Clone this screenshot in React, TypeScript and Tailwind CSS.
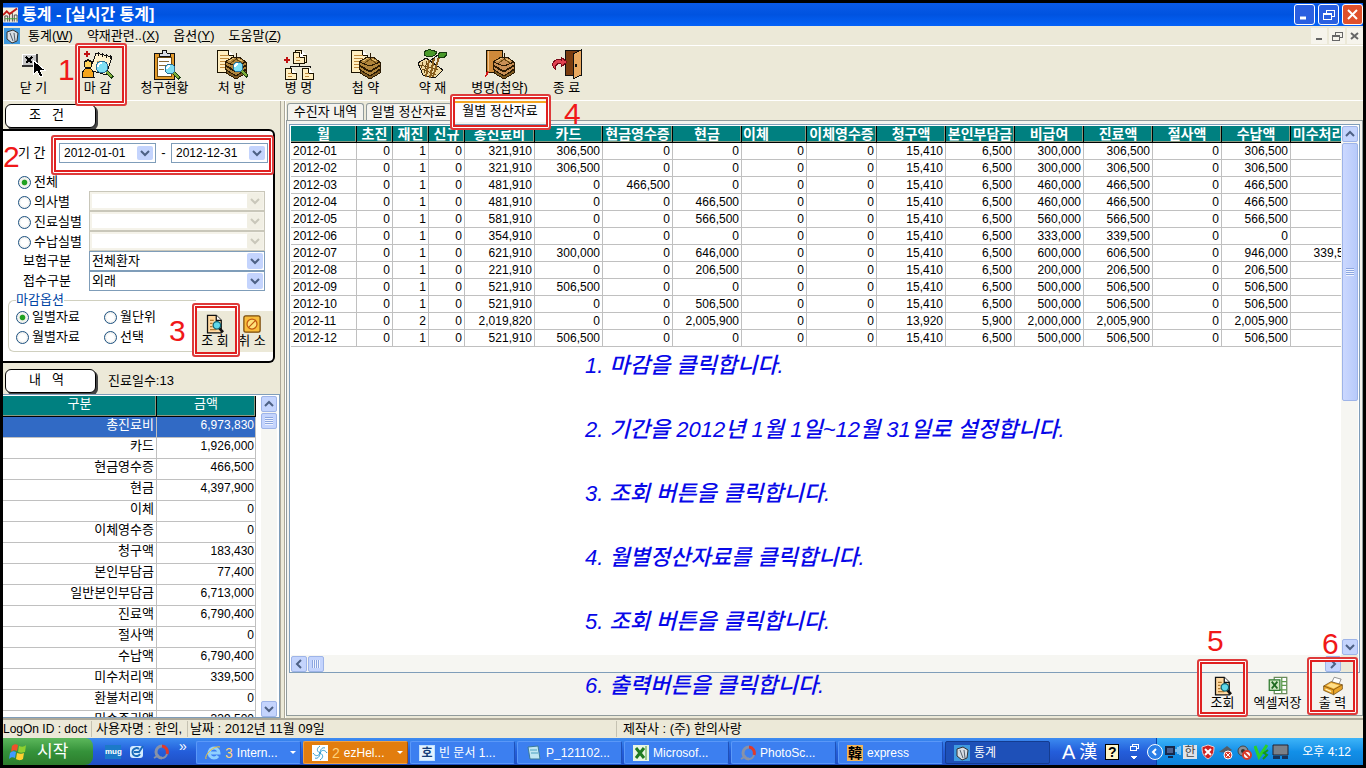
import { useState } from 'react';
import type { ReactNode } from 'react';
import clsx from 'clsx';

interface Column {
  name: string;
  width: number;
  align?: 'left';
}

const columns: Column[] = [
  { name: '월', width: 66 },
  { name: '초진', width: 36 },
  { name: '재진', width: 36 },
  { name: '신규', width: 36 },
  { name: '총진료비', width: 70 },
  { name: '카드', width: 68 },
  { name: '현금영수증', width: 70 },
  { name: '현금', width: 69 },
  { name: '이체', width: 65, align: 'left' },
  { name: '이체영수증', width: 70 },
  { name: '청구액', width: 69 },
  { name: '본인부담금', width: 69 },
  { name: '비급여', width: 69 },
  { name: '진료액', width: 69 },
  { name: '절사액', width: 69 },
  { name: '수납액', width: 69 },
  { name: '미수처리액', width: 69 },
];

const months: string[][] = [
  ['2012-01', '0', '1', '0', '321,910', '306,500', '0', '0', '0', '0', '15,410', '6,500', '300,000', '306,500', '0', '306,500', ''],
  ['2012-02', '0', '1', '0', '321,910', '306,500', '0', '0', '0', '0', '15,410', '6,500', '300,000', '306,500', '0', '306,500', ''],
  ['2012-03', '0', '1', '0', '481,910', '0', '466,500', '0', '0', '0', '15,410', '6,500', '460,000', '466,500', '0', '466,500', ''],
  ['2012-04', '0', '1', '0', '481,910', '0', '0', '466,500', '0', '0', '15,410', '6,500', '460,000', '466,500', '0', '466,500', ''],
  ['2012-05', '0', '1', '0', '581,910', '0', '0', '566,500', '0', '0', '15,410', '6,500', '560,000', '566,500', '0', '566,500', ''],
  ['2012-06', '0', '1', '0', '354,910', '0', '0', '0', '0', '0', '15,410', '6,500', '333,000', '339,500', '0', '0', ''],
  ['2012-07', '0', '1', '0', '621,910', '300,000', '0', '646,000', '0', '0', '15,410', '6,500', '600,000', '606,500', '0', '946,000', '339,500'],
  ['2012-08', '0', '1', '0', '221,910', '0', '0', '206,500', '0', '0', '15,410', '6,500', '200,000', '206,500', '0', '206,500', ''],
  ['2012-09', '0', '1', '0', '521,910', '506,500', '0', '0', '0', '0', '15,410', '6,500', '500,000', '506,500', '0', '506,500', ''],
  ['2012-10', '0', '1', '0', '521,910', '0', '0', '506,500', '0', '0', '15,410', '6,500', '500,000', '506,500', '0', '506,500', ''],
  ['2012-11', '0', '2', '0', '2,019,820', '0', '0', '2,005,900', '0', '0', '13,920', '5,900', '2,000,000', '2,005,900', '0', '2,005,900', ''],
  ['2012-12', '0', '1', '0', '521,910', '506,500', '0', '0', '0', '0', '15,410', '6,500', '500,000', '506,500', '0', '506,500', ''],
];

const summary: [string, string][] = [
  ['총진료비', '6,973,830'],
  ['카드', '1,926,000'],
  ['현금영수증', '466,500'],
  ['현금', '4,397,900'],
  ['이체', '0'],
  ['이체영수증', '0'],
  ['청구액', '183,430'],
  ['본인부담금', '77,400'],
  ['일반본인부담금', '6,713,000'],
  ['진료액', '6,790,400'],
  ['절사액', '0'],
  ['수납액', '6,790,400'],
  ['미수처리액', '339,500'],
  ['환불처리액', '0'],
  ['미수준리액', '339,500'],
];

const notes = [
  '1. 마감을 클릭합니다.',
  '2. 기간을 2012년 1월 1일~12월 31일로 설정합니다.',
  '3. 조회 버튼을 클릭합니다.',
  '4. 월별정산자료를 클릭합니다.',
  '5. 조회 버튼을 클릭합니다.',
  '6. 출력버튼을 클릭합니다.',
];

/* ---------- icon parts ---------- */

function Page({ x, y, w = 16, h = 20 }: { x: number; y: number; w?: number; h?: number }) {
  const lines = [];
  for (let ly = y + 5; ly < y + h - 2; ly += 3) lines.push(ly);
  return (
    <g>
      <path d={`M${x} ${y}h${w - 5}l5 5v${h - 5}h-${w}z`} fill="#ffeec0" stroke="#1a1200" />
      <path d={`M${x + w - 5} ${y}v5h5`} fill="#fff" stroke="#1a1200" />
      {lines.map((ly) => (
        <path key={ly} d={`M${x + 3} ${ly}h${w - 7}`} stroke="#c08a3c" />
      ))}
    </g>
  );
}

function Magnifier({ x, y, r = 5 }: { x: number; y: number; r?: number }) {
  return (
    <g>
      <path d={`M${x + r - 1} ${y + r - 1}l6 6`} stroke="#173b10" strokeWidth="4" />
      <path d={`M${x + r - 1} ${y + r - 1}l5 5`} stroke="#7fae3a" strokeWidth="2" />
      <circle cx={x} cy={y} r={r} fill="#7fe0f5" stroke="#2b6f97" />
      <path d={`M${x - r + 2} ${y}a${r - 2} ${r - 2} 0 0 1 ${r - 2} -${r - 2}`} stroke="#fff" strokeWidth="2" fill="none" />
    </g>
  );
}

function HerbPack({ x, y, color = '#b0853c' }: { x: number; y: number; color?: string }) {
  return (
    <g transform={`translate(${x} ${y})`} stroke="#2a1a04">
      <path d="M1 14l10 6 10-6v3l-10 6-10-6z" fill="#7d5a22" />
      <path d="M0 10l11 6 10-6v3l-10 7-11-7z" fill={color} />
      <path d="M0 6L8 1h6l7 5v3l-10 6L0 9z" fill={color} />
      <path d="M0 6l11 4 10-4M11 -3v6" fill="none" />
      <path d="M11 3l-5 4M11 3l6 4" stroke="#6b4a12" fill="none" />
      <path d="M4 5l5-3M13 3l4 2" stroke="#e7c67c" />
    </g>
  );
}

/* Toolbar pictures are low-resolution pixel art, so edges stay hard */
function Svg({ size = 32, children }: { size?: number; children: ReactNode }) {
  return (
    <svg
      width={size}
      height={size}
      viewBox="0 0 32 32"
      fill="none"
      shapeRendering={size === 32 ? 'crispEdges' : 'auto'}
      aria-hidden="true"
    >
      {children}
    </svg>
  );
}

const icons: Record<string, ReactNode> = {
  close: (
    <Svg>
      <path d="M4 5h14v12H4z" fill="#c6c6c6" />
      <path d="M4 17V5h14" stroke="#fff" />
      <path d="M4 17h15V5" stroke="#333" strokeWidth="2" />
      <path d="M8 8l6 6M14 8l-6 6" stroke="#000" strokeWidth="2" />
      <path d="M15 11v15l4-4 3 6 3-1-3-6h5z" fill="#000" stroke="#fff" />
    </Svg>
  ),
  closing: (
    <Svg>
      <path d="M5 2v6M2 5h6" stroke="#c01010" strokeWidth="2" />
      <path d="M14 4l16 4-6 18-16-5z" fill="#fff3cf" stroke="#111" />
      <path d="M16 3v4M20 4v4M24 5v4M28 6v4" stroke="#111" />
      <path d="M15 12l4 1M14 16l4 1" stroke="#c9a35a" />
      <path d="M0 28c0-8 3-9 6-9s6 1 6 9z" fill="#f4a51c" stroke="#111" />
      <circle cx="6" cy="15" r="4" fill="#ffd35a" stroke="#111" />
      <path d="M2 14c0-5 8-5 8 0l-4-2z" fill="#111" />
      <Magnifier x={20} y={18} r={6} />
    </Svg>
  ),
  clipboard: (
    <Svg>
      <path d="M5 4h20v26H5z" fill="#e39a2a" stroke="#111" />
      <path d="M8 8h14v19H8z" fill="#fff" stroke="#6b4a12" />
      <path d="M10 7V4h3c0-4 5-4 5 0h3v3z" fill="#d8dce4" stroke="#111" />
      <path d="M10 12h10M10 16h7M10 20h5" stroke="#8c6a36" />
      <Magnifier x={21} y={20} r={5} />
    </Svg>
  ),
  prescription: (
    <Svg>
      <Page x={1} y={1} w={16} h={22} />
      <HerbPack x={9} y={7} />
      <Magnifier x={22} y={18} r={5} />
    </Svg>
  ),
  disease: (
    <Svg>
      <path d="M16 13v4M7 19v-2h20v2" stroke="#111" />
      <path d="M4 8v6M1 11h6" stroke="#c01010" strokeWidth="2" />
      <Page x={12} y={1} w={11} h={12} />
      <Page x={10} y={3} w={11} h={11} />
      <Page x={2} y={19} w={11} h={11} />
      <Page x={19} y={19} w={11} h={11} />
    </Svg>
  ),
  pack: (
    <Svg>
      <Page x={1} y={1} w={16} h={22} />
      <HerbPack x={9} y={7} />
    </Svg>
  ),
  herb: (
    <Svg>
      <path d="M1 14l8-5 17 12-8 8-12-3z" fill="#efd9a0" stroke="#111" />
      <path d="M3 16l18 5M5 20l14 6M6 13l-2 6M10 12l-3 12" stroke="#6b4a12" />
      <path d="M12 11l-3 17M17 9l-4 20M22 8l-6 20" stroke="#8a5f1e" strokeWidth="2" />
      <path d="M13 12l8-6 4 1" stroke="#111" />
      <path d="M7 3c4-4 9-2 13 0-3 6-9 6-13 3z" fill="#4a9a2a" stroke="#173b10" />
      <path d="M21 5c3-3 6-2 9-1-1 5-5 6-9 4z" fill="#4a9a2a" stroke="#173b10" />
    </Svg>
  ),
  diseasePack: (
    <Svg>
      <path d="M2 1h16v22l-14 1-2-2z" fill="#cf8a3a" stroke="#1a1200" />
      <path d="M4 2v20" stroke="#f2c38a" />
      <path d="M3 22l-2 6 3-2 1-3z" fill="#d01818" />
      <HerbPack x={9} y={7} color="#c78f55" />
    </Svg>
  ),
  exit: (
    <Svg>
      <path d="M14 1h16v25H14z" fill="#7a3c10" stroke="#111" />
      <path d="M22 5l8-4v25l-8 4z" fill="#e8a860" stroke="#111" />
      <path d="M25 15v3" stroke="#111" strokeWidth="2" />
      <path d="M4 20c-5-5-1-11 6-9V8l6 5-6 5v-3c-4-1-6 1-6 5z" fill="#e04050" stroke="#7a0a18" />
    </Svg>
  ),
  search: (
    <Svg size={20}>
      <path d="M4 2h14l8 8v20H4z" fill="#ffd9a0" stroke="#111" strokeWidth="2" />
      <path d="M18 2v8h8" fill="#fff" stroke="#111" strokeWidth="2" />
      <path d="M8 10h6M8 15h4M8 20h4M8 25h10" stroke="#b07a30" strokeWidth="2" />
      <path d="M22 22l7 7" stroke="#111" strokeWidth="4" />
      <circle cx="19" cy="18" r="6" fill="#5fd8ea" stroke="#0d6070" strokeWidth="2" />
    </Svg>
  ),
  cancel: (
    <Svg size={20}>
      <rect x="3" y="3" width="26" height="26" rx="3" fill="#f9bd3c" stroke="#7a4a08" strokeWidth="2" />
      <circle cx="16" cy="16" r="8" fill="#ffe27a" stroke="#c05a10" strokeWidth="2" />
      <path d="M11 21l10-10" stroke="#c05a10" strokeWidth="2" />
    </Svg>
  ),
  excel: (
    <Svg size={20}>
      <path d="M10 2h20v26H10z" fill="#fff" stroke="#6a8a5c" strokeWidth="2" />
      <path d="M22 3v24M22 9h8M22 15h8M12 22h18" stroke="#5c9a4c" strokeWidth="2" />
      <path d="M2 6h17v17H2z" fill="#cfe6c4" stroke="#2f7a2f" strokeWidth="2" />
      <path d="M6 9l9 11M15 9l-9 11" stroke="#1f6a22" strokeWidth="3" />
    </Svg>
  ),
  printer: (
    <Svg size={20}>
      <path d="M14 10l4-8 11 3-4 9z" fill="#fff" stroke="#555" />
      <path d="M1 16l12-7 18 5v7l-14 9L1 23z" fill="#eaa52a" stroke="#5a3806" />
      <path d="M1 16l16 6 14-8M17 22v8" stroke="#5a3806" />
      <path d="M6 15l7-4 13 4-9 5z" fill="#ffdf8a" />
      <path d="M4 21l9 4" stroke="#fff2c0" strokeWidth="2" />
    </Svg>
  ),
};

function AppIcon() {
  return (
    <svg width="16" height="16" viewBox="0 0 16 16" aria-hidden="true">
      <rect width="16" height="16" fill="#3f9ae0" />
      <path d="M3 4l6-2 5 3-1 8-5 2-5-4z" fill="#d7dde4" stroke="#333" />
      <path d="M6 5l3 8M10 5l1 8" stroke="#55606e" />
    </svg>
  );
}

/* ---------- small controls ---------- */

function Chevron({ dir = 'down', disabled }: { dir?: 'up' | 'down' | 'left' | 'right'; disabled?: boolean }) {
  const paths = {
    down: 'M1 3l4 4 4-4',
    up: 'M1 7l4-4 4 4',
    left: 'M7 1L3 5l4 4',
    right: 'M3 1l4 4-4 4',
  };
  return (
    <svg width="10" height="10" viewBox="0 0 10 10" fill="none" aria-hidden="true">
      <path d={paths[dir]} stroke={disabled ? '#c9c7ba' : '#4d6185'} strokeWidth="2" />
    </svg>
  );
}

function ScrollButton({ dir, label }: { dir: 'up' | 'down' | 'left' | 'right'; label: string }) {
  return (
    <button
      type="button"
      aria-label={label}
      className="flex size-4 shrink-0 items-center justify-center rounded-xs border border-[#9eb4e8] bg-[#c4d4fd]"
    >
      <Chevron dir={dir} />
    </button>
  );
}

function Combo({ label, value, disabled }: { label: string; value?: string; disabled?: boolean }) {
  return (
    <div className={clsx('relative h-5 w-[176px] border bg-white', disabled ? 'border-[#c9c7ba]' : 'border-[#7f9db9]')}>
      <select
        aria-label={label}
        disabled={disabled}
        className={clsx(
          'block size-full appearance-none pl-0.5 text-[13px] leading-4 opacity-100 outline-none',
          disabled && 'border-2 border-[#f5f3ea]'
        )}
      >
        <option>{value ?? ''}</option>
      </select>
      <span
        className={clsx(
          'pointer-events-none absolute inset-y-px right-px flex w-4 items-center justify-center rounded-xs',
          disabled ? 'bg-[#f1efe4]' : 'bg-[#c4d4fd]'
        )}
      >
        <Chevron disabled={disabled} />
      </span>
    </div>
  );
}

function DateBox({ label, value }: { label: string; value: string }) {
  return (
    <div className="flex h-5 w-[97px] items-center border border-[#7f9db9] bg-white pr-0.5">
      <input aria-label={label} defaultValue={value} className="w-full min-w-0 pl-1 text-xs leading-4 outline-none" />
      <button type="button" aria-label={`${label} 선택`} className="flex h-3.5 w-4 shrink-0 items-center justify-center rounded-xs bg-[#c4d4fd]">
        <Chevron />
      </button>
    </div>
  );
}

interface RadioProps {
  name: string;
  label: string;
  checked: boolean;
  onChange: () => void;
  className?: string;
}

function Radio({ name, label, checked, onChange, className }: RadioProps) {
  return (
    <label className={clsx('flex items-center gap-[3px] whitespace-nowrap', className)}>
      <input
        type="radio"
        name={name}
        checked={checked}
        onChange={onChange}
        className="size-[13px] shrink-0 appearance-none rounded-full border border-[#1c5180] bg-[radial-gradient(circle,#fff_40%,#dcdcd7)] checked:bg-[radial-gradient(circle,#21a121_30%,#f2f2ee_42%)]"
      />
      <span>{label}</span>
    </label>
  );
}

/* Red double frame drawn round a control */
function Frame({ className }: { className: string }) {
  return (
    <span
      className={clsx(
        'pointer-events-none absolute z-10 rounded-[3px] border-2 border-[#de3a3a] shadow-[inset_0_0_0_1px_#fff,inset_0_0_0_3px_#e02020]',
        className
      )}
    />
  );
}

function Step({ children, className }: { children: ReactNode; className: string }) {
  return (
    <span className={clsx('pointer-events-none absolute z-10 text-[30px] leading-6 text-[#f01818]', className)}>{children}</span>
  );
}

/* ---------- window chrome ---------- */

function TitleBar() {
  const base = 'flex size-[21px] items-center justify-center rounded-[3px] border border-white';
  return (
    <header className="flex h-[23px] shrink-0 items-center bg-linear-to-b from-[#0a5ae8] via-[#0053e0] to-[#0462f8]">
      <svg width="15" height="16" viewBox="0 0 16 16" aria-hidden="true">
        <rect width="16" height="16" fill="#f3efe0" />
        <path d="M2 15V9h3v6M7 15V6h3v9M12 15V8h3v7" fill="none" stroke="#444" />
        <path d="M2 12h13" stroke="#3a9a3a" />
        <path d="M0 8l4-4 3 3 8-6" fill="none" stroke="#c01818" strokeWidth="2" />
      </svg>
      <h1 className="ml-1 text-[16px] leading-5 font-bold whitespace-pre text-white">통계 - [실시간 통계]</h1>
      <div className="ml-auto flex gap-[3px] text-white">
        <button type="button" aria-label="최소화" className={clsx(base, 'bg-[#2a5fe0]')}>
          <svg width="13" height="13" viewBox="0 0 13 13"><path d="M2 10h6" stroke="currentColor" strokeWidth="3" /></svg>
        </button>
        <button type="button" aria-label="이전 크기로" className={clsx(base, 'bg-[#2a5fe0]')}>
          <svg width="13" height="13" viewBox="0 0 13 13" fill="none" shapeRendering="crispEdges">
            <path d="M4 5V2h8v6H9M1 5h8v6H1zM1 6h8" stroke="currentColor" />
          </svg>
        </button>
        <button type="button" aria-label="닫기" className={clsx(base, 'bg-[#e0512c]')}>
          <svg width="13" height="13" viewBox="0 0 13 13"><path d="M2 2l9 9M11 2l-9 9" stroke="currentColor" strokeWidth="2" /></svg>
        </button>
      </div>
    </header>
  );
}

function MenuBar() {
  const items: [string, string][] = [
    ['통계', 'W'],
    ['약재관련..', 'X'],
    ['옵션', 'Y'],
    ['도움말', 'Z'],
  ];
  const mdi = 'flex size-4 items-center justify-center bg-[#f6f4ec] text-[#666]';
  return (
    <nav className="flex h-5 shrink-0 items-center border-b border-white pl-px">
      <AppIcon />
      <div className="ml-2 flex gap-3.5">
        {items.map(([name, key]) => (
          <button key={key} type="button" className="leading-4">
            {name}(<u>{key}</u>)
          </button>
        ))}
      </div>
      <div className="ml-auto flex gap-0.5">
        <button type="button" aria-label="문서 최소화" className={mdi}>
          <svg width="12" height="12" viewBox="0 0 12 12"><path d="M3 9h6" stroke="currentColor" strokeWidth="2" /></svg>
        </button>
        <button type="button" aria-label="문서 이전 크기로" className={mdi}>
          <svg width="12" height="12" viewBox="0 0 12 12" fill="none" shapeRendering="crispEdges">
            <path d="M4 5V2h7v5H8M1 5h7v5H1zM1 6h7" stroke="currentColor" />
          </svg>
        </button>
        <button type="button" aria-label="문서 닫기" className={mdi}>
          <svg width="12" height="12" viewBox="0 0 12 12"><path d="M2 3l7 6M9 3l-7 6" stroke="currentColor" strokeWidth="2" /></svg>
        </button>
      </div>
    </nav>
  );
}

function ToolBar() {
  const tools = [
    { label: '닫 기', icon: 'close' },
    { label: '마 감', icon: 'closing' },
    { label: '청구현황', icon: 'clipboard' },
    { label: '처 방', icon: 'prescription' },
    { label: '병 명', icon: 'disease' },
    { label: '첩 약', icon: 'pack' },
    { label: '약 재', icon: 'herb' },
    { label: '병명(첩약)', icon: 'diseasePack' },
    { label: '종 료', icon: 'exit' },
  ];
  return (
    <div className="flex h-[55px] shrink-0 border-b border-white">
      {tools.map((tool, i) => (
        <button
          key={tool.icon}
          type="button"
          className={clsx('relative flex flex-col items-center pt-[3px]', i === 0 ? 'w-[61px]' : 'w-[67px]')}
        >
          {icons[tool.icon]}
          <span className="leading-[14px] whitespace-nowrap">{tool.label}</span>
          {tool.icon === 'closing' && (
            <>
              <Frame className="-top-[3px] left-[11px] h-[63px] w-[52px]" />
              <Step className="top-3 -left-1.5">1</Step>
            </>
          )}
        </button>
      ))}
    </div>
  );
}

function SectionTab({ children }: { children: ReactNode }) {
  return (
    <h2 className="flex h-6 w-[91px] items-center justify-center rounded-md border border-black bg-white pr-2 pb-0.5 whitespace-pre shadow-[2px_2px_0_#444]">
      {children}
    </h2>
  );
}

function Conditions() {
  const [target, setTarget] = useState('전체');
  const [unit, setUnit] = useState('일별자료');
  return (
    <form className="mt-px w-[272px] rounded-r-md border-y-2 border-r-2 border-black bg-white pb-[9px]" onSubmit={(e) => e.preventDefault()}>
      <div className="relative mt-2 flex h-7 items-center pl-[15px]">
        <span className="w-[41px] leading-4">기 간</span>
        <DateBox label="시작일" value="2012-01-01" />
        <span className="w-[15px] text-center">-</span>
        <DateBox label="종료일" value="2012-12-31" />
        <Frame className="-top-1 left-12 h-10 w-[223px]" />
        <Step className="top-1.5 left-0">2</Step>
      </div>

      <Radio name="target" label="전체" checked={target === '전체'} onChange={() => setTarget('전체')} className="mt-1.5 ml-[15px] h-[18px]" />
      {['의사별', '진료실별', '수납실별'].map((name) => (
        <div key={name} className="flex h-5 items-center pl-[15px]">
          <Radio name="target" label={name} checked={target === name} onChange={() => setTarget(name)} className="w-[71px] pt-0.5" />
          <Combo label={name} disabled />
        </div>
      ))}
      {[['보험구분', '전체환자'], ['접수구분', '외래']].map(([name, value]) => (
        <div key={name} className="flex h-5 items-center pl-5">
          <span className="w-[66px] leading-4">{name}</span>
          <Combo label={name} value={value} />
        </div>
      ))}

      <div className="mt-0.5 flex items-end pl-[5px]">
        <fieldset className="w-[188px] rounded-l-md border border-r-0 border-[#d0d0bf] pb-1 pl-[7px]">
          <legend className="leading-[14px] text-[#0046a5]">마감옵션</legend>
          <div className="grid grid-cols-[88px_1fr]">
            {['일별자료', '월단위', '월별자료', '선택'].map((name) => (
              <Radio key={name} name="unit" label={name} checked={unit === name} onChange={() => setUnit(name)} className="h-5" />
            ))}
          </div>
        </fieldset>
        <div className="relative flex h-[41px] flex-1 bg-[#ece9d8]">
          <button type="submit" className="flex w-[38px] flex-col items-center pt-[3px]">
            {icons.search}
            <span className="leading-[14px] whitespace-nowrap">조 회</span>
          </button>
          <button type="button" className="flex w-9 flex-col items-center pt-[3px]">
            {icons.cancel}
            <span className="leading-[14px] whitespace-nowrap">취 소</span>
          </button>
          <Frame className="-top-2 -left-1 h-[54px] w-12" />
          <Step className="top-2 -left-[27px]">3</Step>
        </div>
      </div>
    </form>
  );
}

function Summary() {
  return (
    <div className="mt-px flex min-h-0 flex-1 overflow-hidden border-t border-r border-b border-[#7f9db9] bg-white pt-px">
      <div className="flex-1 overflow-hidden">
        <table className="w-[253px] table-fixed border-separate border-spacing-0">
          <thead>
            <tr className="bg-[#008080] text-white">
              <th className="h-[21px] w-[154px] border-r border-b border-black p-0 pb-1 leading-4 font-normal shadow-[inset_-1px_-1px_#8a9a80]">구분</th>
              <th className="h-[21px] border-r border-b border-black p-0 pb-1 leading-4 font-normal shadow-[inset_-1px_-1px_#8a9a80]">금액</th>
            </tr>
          </thead>
          <tbody>
            {summary.map(([name, amount], i) => (
              <tr key={name} className={clsx('text-right', i === 0 && 'bg-[#316ac5] text-white')}>
                <td className="h-[21px] border-r border-b border-[#c0c0c0] p-0 pr-0.5 pb-1 leading-4">{name}</td>
                <td className="h-[21px] border-r border-b border-[#c0c0c0] p-0 pr-px pb-1 text-xs leading-4">{amount}</td>
              </tr>
            ))}
          </tbody>
        </table>
      </div>
      <div className="mr-0.5 flex w-4 flex-col bg-[#f6f6f2]">
        <ScrollButton dir="up" label="위로" />
        <div className="mt-px flex h-4 items-center justify-center rounded-xs border border-[#9eb4e8] bg-[#c4d4fd]">
          <span className="h-2 w-2 bg-[repeating-linear-gradient(#8ca6e0_0_1px,#eef3ff_1px_2px)]" />
        </div>
        <div className="flex-1" />
        <ScrollButton dir="down" label="아래로" />
      </div>
    </div>
  );
}

function MonthGrid() {
  return (
    <div className="flex min-h-0 flex-1 flex-col border border-[#7f9db9] bg-white p-px pb-0">
      <div className="flex min-h-0 flex-1">
        <div className="min-w-0 flex-1 overflow-hidden">
          <table className="w-[1069px] table-fixed border-separate border-spacing-0">
            <colgroup>
              {columns.map((col) => (
                <col key={col.name} style={{ width: col.width }} />
              ))}
            </colgroup>
            <thead>
              <tr>
                {columns.map((col) => (
                  <th
                    key={col.name}
                    className={clsx(
                      'h-[17px] overflow-hidden border-r border-b border-black bg-[#008080] p-0 text-sm leading-4 font-bold whitespace-nowrap text-white shadow-[inset_-1px_-1px_#8a9a80]',
                      col.align === 'left' ? 'pl-px text-left' : 'text-center'
                    )}
                  >
                    {col.name}
                  </th>
                ))}
              </tr>
            </thead>
            <tbody>
              {months.map((row) => (
                <tr key={row[0]}>
                  {row.map((cell, i) => (
                    <td
                      key={columns[i].name}
                      className={clsx(
                        'h-[17px] border-r border-b border-[#c0c0c0] p-0 text-xs leading-4',
                        i === 0 ? 'pl-0.5 text-left' : 'pr-0.5 text-right'
                      )}
                    >
                      {cell}
                    </td>
                  ))}
                </tr>
              ))}
            </tbody>
          </table>
        </div>
        <div className="flex w-[17px] flex-col items-center bg-[#f6f6f2]">
          <ScrollButton dir="up" label="위로" />
          <div className="mt-px flex h-[258px] w-4 items-center justify-center rounded-xs border border-[#9eb4e8] bg-linear-to-r from-[#cbd8ff] to-[#b7cafa]">
            <span className="h-2 w-2 bg-[repeating-linear-gradient(#8ca6e0_0_1px,#eef3ff_1px_2px)]" />
          </div>
          <div className="flex-1" />
          <ScrollButton dir="down" label="아래로" />
        </div>
      </div>
      <div className="flex h-[17px] shrink-0 items-center bg-[#f6f6f2]">
        <ScrollButton dir="left" label="왼쪽으로" />
        <div className="ml-px flex size-4 items-center justify-center rounded-xs border border-[#9eb4e8] bg-[#c4d4fd]">
          <span className="h-2 w-2 bg-[repeating-linear-gradient(90deg,#8ca6e0_0_1px,#eef3ff_1px_2px)]" />
        </div>
        <div className="flex-1" />
        <ScrollButton dir="right" label="오른쪽으로" />
        <span className="w-[17px] self-stretch bg-[#ece9d8]" />
      </div>
    </div>
  );
}

function Results() {
  const tab = 'rounded-t-[3px] border border-b-0 border-[#919b9c] whitespace-nowrap leading-4';
  return (
    <section className="relative flex min-w-0 flex-1 flex-col border-l border-white">
      <div role="tablist" className="flex h-[19px] shrink-0 items-end pl-px">
        <button type="button" role="tab" aria-selected="false" className={clsx(tab, 'h-[17px] w-[77px] bg-[#f4f3ee]')}>수진자 내역</button>
        <button type="button" role="tab" aria-selected="false" className={clsx(tab, 'ml-0.5 h-[17px] w-[86px] overflow-hidden bg-[#f4f3ee] pl-1 text-left')}>일별 정산자료</button>
        <button type="button" role="tab" aria-selected="true" className={clsx(tab, 'relative z-10 -mb-0.5 h-[21px] w-[96px] border-t-2 border-t-[#f5a623] bg-[#fcfcfe] pb-1')}>
          월별 정산자료
          <Frame className="-top-[9px] -left-[3px] h-9 w-[101px]" />
          <Step className="-top-px left-[111px]">4</Step>
        </button>
      </div>
      <div className="mb-0.5 flex min-h-0 flex-1 flex-col border border-[#919b9c] bg-[#f4f3ee] px-0.5 pt-[3px]">
        <MonthGrid />
        <div className="flex h-[42px] shrink-0 justify-end">
          <button type="button" className="relative flex w-[55px] flex-col items-center pt-[3px]">
            {icons.search}
            <span className="leading-[14px]">조회</span>
            <Frame className="-top-3.5 left-0.5 h-[58px] w-[51px]" />
            <Step className="-top-11 left-3">5</Step>
          </button>
          <button type="button" className="flex w-[55px] flex-col items-center pt-[3px]">
            {icons.excel}
            <span className="leading-[14px] whitespace-nowrap">엑셀저장</span>
          </button>
          <button type="button" className="relative flex w-[55px] flex-col items-center pt-[3px]">
            {icons.printer}
            <span className="leading-[14px] whitespace-nowrap">출 력</span>
            <Frame className="-top-4 left-0.5 h-[58px] w-[51px]" />
            <Step className="-top-[41px] left-[17px]">6</Step>
          </button>
        </div>
      </div>
      <ol className="pointer-events-none absolute top-[233px] left-[299px] text-[22px] leading-[64px] font-medium whitespace-nowrap text-[#0808e8] italic">
        {notes.map((note) => (
          <li key={note}>{note}</li>
        ))}
      </ol>
    </section>
  );
}

function StatusBar() {
  return (
    <footer className="flex h-5 shrink-0 items-center border-t-2 border-[#aca899] leading-4 whitespace-nowrap">
      <span className="w-[89px] border-r border-[#c5c2b2] text-xs leading-4">LogOn ID : doct</span>
      <span className="w-24 border-r border-[#c5c2b2] pl-1">사용자명 : 한의,</span>
      <span className="w-[429px] border-r border-[#c5c2b2] pl-0.5">날짜 : 2012년 11월 09일</span>
      <span className="pl-1.5">제작사 : (주) 한의사랑</span>
    </footer>
  );
}

/* ---------- taskbar ---------- */

function Swirl({ a = '#667', b = '#e03a2a' }: { a?: string; b?: string }) {
  return (
    <svg width="16" height="16" viewBox="0 0 16 16" fill="none" aria-hidden="true">
      <path d="M9 2a6 6 0 1 0 0 12" stroke={a} strokeWidth="3" />
      <path d="M9 2a6 6 0 0 1 5 8" stroke={b} strokeWidth="3" />
      <path d="M9 14c3 0 4-1 5-4M1 14l5-3" stroke={a} strokeWidth="2" />
    </svg>
  );
}

const tasks: { text: string; count?: number; icon: ReactNode; tone?: 'orange' | 'active' }[] = [
  {
    text: 'Intern...',
    count: 3,
    icon: (
      <svg width="16" height="16" viewBox="0 0 16 16" fill="none" aria-hidden="true">
        <path d="M13 11a5 5 0 1 1 1-3H4" stroke="#8fd0ff" strokeWidth="3" />
        <path d="M1 14C-1 10 9 0 15 2" stroke="#f2c234" strokeWidth="1" />
      </svg>
    ),
  },
  {
    text: 'ezHel...',
    count: 2,
    tone: 'orange',
    icon: (
      <svg width="16" height="16" viewBox="0 0 16 16" fill="none" aria-hidden="true">
        <rect width="16" height="16" fill="#fff" />
        <path d="M8 8C4 6 5 3 8 1M8 8c2-4 5-3 7 0M8 8c4 2 3 5 0 7M8 8c-2 4-5 3-7 0M8 8c0-4 3-6 5-5M8 8c0 4-3 6-5 5" stroke="#2a9ad0" />
      </svg>
    ),
  },
  {
    text: '빈 문서 1...',
    icon: (
      <span className="flex size-4 items-center justify-center border border-[#bfe0ff] bg-[#e4f2ff] text-xs leading-4 font-bold text-[#123c78]">호</span>
    ),
  },
  {
    text: 'P_121102...',
    icon: (
      <svg width="16" height="16" viewBox="0 0 16 16" aria-hidden="true">
        <path d="M2 2l10-1 2 13H4z" fill="#bfe6f2" stroke="#3a7a9a" />
        <path d="M4 5h7M5 8h7" stroke="#4aa0c0" />
      </svg>
    ),
  },
  {
    text: 'Microsof...',
    icon: (
      <svg width="16" height="16" viewBox="0 0 16 16" aria-hidden="true">
        <rect width="16" height="16" fill="#e8f5e2" />
        <path d="M3 3l8 10M11 3L3 13" stroke="#1f7a22" strokeWidth="3" />
        <path d="M13 1v14" stroke="#4a9a3a" />
      </svg>
    ),
  },
  { text: 'PhotoSc...', icon: <Swirl a="#8892a8" /> },
  {
    text: 'express',
    icon: <span className="flex size-4 items-center justify-center bg-[#f0b45a] text-sm leading-4 font-bold text-black">韓</span>,
  },
  { text: '통계', tone: 'active', icon: <AppIcon /> },
];

function TaskBar() {
  return (
    <div className="flex h-[27px] shrink-0 items-center bg-linear-to-b from-[#3d8bf0] via-[#245edb] to-[#1f4fc4] text-white">
      <button
        type="button"
        className="flex h-full w-[90px] items-center gap-2 rounded-r-lg bg-linear-to-b from-[#5cb85c] via-[#35923a] to-[#2c7d2c] pl-1.5"
      >
        <svg width="20" height="18" viewBox="0 0 20 18" aria-hidden="true">
          <path d="M3 3c2-2 4-2 6-1L8 8C6 7 4 7 2 9z" fill="#f0502a" />
          <path d="M10 3c3 1 5 1 7-1l-1 7c-3 1-5 1-7 0z" fill="#8ed030" />
          <path d="M1 10c2-2 4-2 6-1l-1 6c-2-1-4-1-6 1z" fill="#3f9aff" />
          <path d="M8 10c3 1 5 1 7 0l-1 6c-3 2-5 1-7 0z" fill="#ffd030" />
        </svg>
        <span className="text-[17px] leading-5">시작</span>
      </button>
      <div className="ml-3 flex items-center gap-2">
        <button type="button" className="h-3.5 w-4 bg-[#1c7ac8] text-[8px] leading-3 font-bold">mug</button>
        <button type="button" aria-label="바탕 화면 보기">
          <svg width="16" height="16" viewBox="0 0 16 16" aria-hidden="true">
            <rect x="1" y="2" width="13" height="12" rx="3" fill="#d4ebff" />
            <path d="M10 5a4 4 0 1 0 1 5M5 8h5l4-6" fill="none" stroke="#1a6ab8" strokeWidth="2" />
          </svg>
        </button>
        <button type="button" aria-label="PhotoScape"><Swirl a="#8892a8" /></button>
      </div>
      <span className="ml-2.5 w-[17px] self-start text-sm leading-4">»</span>
      <div className="flex h-full min-w-0 gap-0.5 pt-[3px] pb-px">
        {tasks.map((task) => (
          <button
            key={task.text}
            type="button"
            className={clsx(
              'flex w-[105px] min-w-0 items-center gap-1 rounded-xs border pl-2 text-xs leading-4 whitespace-nowrap',
              !task.tone && 'border-[#5a98f8] border-r-[#1f50b8] bg-[#3c7ff0]',
              task.tone === 'orange' && 'border-[#f0a040] border-r-[#a85408] bg-[#e27d0e]',
              task.tone === 'active' && 'border-[#143c90] bg-[#1e50b8]'
            )}
          >
            {task.icon}
            {task.count && <b className="text-sm leading-4 font-normal text-[#ffd27a]">{task.count}</b>}
            <span>{task.text}</span>
            {task.count && (
              <svg width="6" height="4" viewBox="0 0 6 4" className="mr-1 ml-auto" aria-hidden="true"><path d="M0 0h6L3 3z" fill="#fff" /></svg>
            )}
          </button>
        ))}
      </div>
      <div className="ml-3 flex items-center">
        <span className="text-xl leading-5">A</span>
        <span className="ml-1 text-[18px] leading-5">漢</span>
        <span className="ml-2 flex h-4 w-3.5 items-center justify-center border border-black bg-[#fff6c8] text-sm leading-4 font-bold text-black">?</span>
        <svg width="10" height="20" viewBox="0 0 10 20" fill="none" className="ml-2.5" shapeRendering="crispEdges" aria-hidden="true">
          <path d="M3 4V2h6v4H7M1 4h6v4H1z" stroke="#fff" />
          <path d="M1 14h7l-3 3z" fill="#fff" />
        </svg>
      </div>
      <div className="ml-auto flex h-full w-[207px] items-center border-l border-[#0a3fa8] bg-linear-to-b from-[#3cb4f8] via-[#1290e8] to-[#0e80d8]">
        <button type="button" aria-label="숨겨진 아이콘 표시" className="-ml-2.5 flex size-4 items-center justify-center rounded-full border border-white bg-[#2a80e8]">
          <svg width="8" height="8" viewBox="0 0 8 8" fill="none"><path d="M5 1L2 4l3 3" stroke="#fff" strokeWidth="2" /></svg>
        </button>
        <div className="ml-0.5 flex items-center gap-0.5">
          <svg width="16" height="16" viewBox="0 0 16 16" fill="none" aria-hidden="true">
            <path d="M1 3h8v7H1z" fill="#4a6290" stroke="#16284a" strokeWidth="2" />
            <path d="M3 13h5" stroke="#16284a" strokeWidth="2" />
            <path d="M11 5v3M13 3v7M15 2v9" stroke="#d8ecff" />
          </svg>
          <span className="flex h-3.5 w-3.5 items-center justify-center bg-[#dfe3e8] text-xs leading-[14px] text-[#444]">한</span>
          <svg width="16" height="16" viewBox="0 0 16 16" aria-hidden="true" className="ml-px">
            <path d="M8 1l6 2c0 6-1 9-6 12C3 12 2 9 2 3z" fill="#d02020" stroke="#f0c8c8" />
            <path d="M5 5l6 6M11 5l-6 6" stroke="#fff" strokeWidth="2" />
          </svg>
          <svg width="16" height="16" viewBox="0 0 16 16" aria-hidden="true">
            <path d="M1 8l8-6 5 4-4 3z" fill="#555c66" />
            <circle cx="10" cy="11" r="4" fill="#d83a2a" stroke="#fff" />
            <path d="M8 9l4 4M12 9l-4 4" stroke="#fff" />
          </svg>
          <svg width="16" height="16" viewBox="0 0 16 16" aria-hidden="true">
            <circle cx="7" cy="7" r="5" fill="#8a8f96" stroke="#444" />
            <circle cx="7" cy="7" r="2" fill="#333" />
            <circle cx="11" cy="11" r="4" fill="#fff" stroke="#d83a2a" strokeWidth="2" />
            <path d="M8 8l6 6" stroke="#d83a2a" strokeWidth="2" />
          </svg>
          <svg width="16" height="16" viewBox="0 0 16 16" fill="none" aria-hidden="true">
            <path d="M1 2l4 11 8-12" stroke="#2ad02a" strokeWidth="3" />
            <path d="M14 6l-4 3 3 2-4 4" stroke="#159a15" strokeWidth="2" />
          </svg>
          <svg width="17" height="16" viewBox="0 0 17 16" aria-hidden="true">
            <path d="M1 1h15v10H1z" fill="#7a8088" stroke="#223" />
            <path d="M1 12h7v3H1zM10 12h6v3h-6z" fill="#16345c" />
          </svg>
        </div>
        <time className="ml-auto pr-3 text-xs leading-4 whitespace-nowrap">오후 4:12</time>
      </div>
    </div>
  );
}

export default function App() {
  return (
    <div className="flex h-screen flex-col overflow-hidden bg-black p-[3px] font-['Liberation_Sans','Noto_Sans_CJK_KR',sans-serif] text-[13px] text-black">
      <TitleBar />
      <div className="flex min-h-0 flex-1 flex-col bg-[#ece9d8]">
        <MenuBar />
        <ToolBar />
        <main className="flex min-h-0 flex-1">
          <aside className="flex w-[278px] shrink-0 flex-col border-r border-[#aca899] pt-[3px]">
            <div className="pl-0.5">
              <SectionTab>조   건</SectionTab>
            </div>
            <Conditions />
            <div className="mt-1.5 flex items-center gap-3 pl-0.5">
              <SectionTab>내   역</SectionTab>
              <span className="leading-4">진료일수:13</span>
            </div>
            <Summary />
          </aside>
          <div className="w-1 shrink-0 border-r border-[#aca899]" />
          <Results />
        </main>
        <StatusBar />
      </div>
      <TaskBar />
    </div>
  );
}
